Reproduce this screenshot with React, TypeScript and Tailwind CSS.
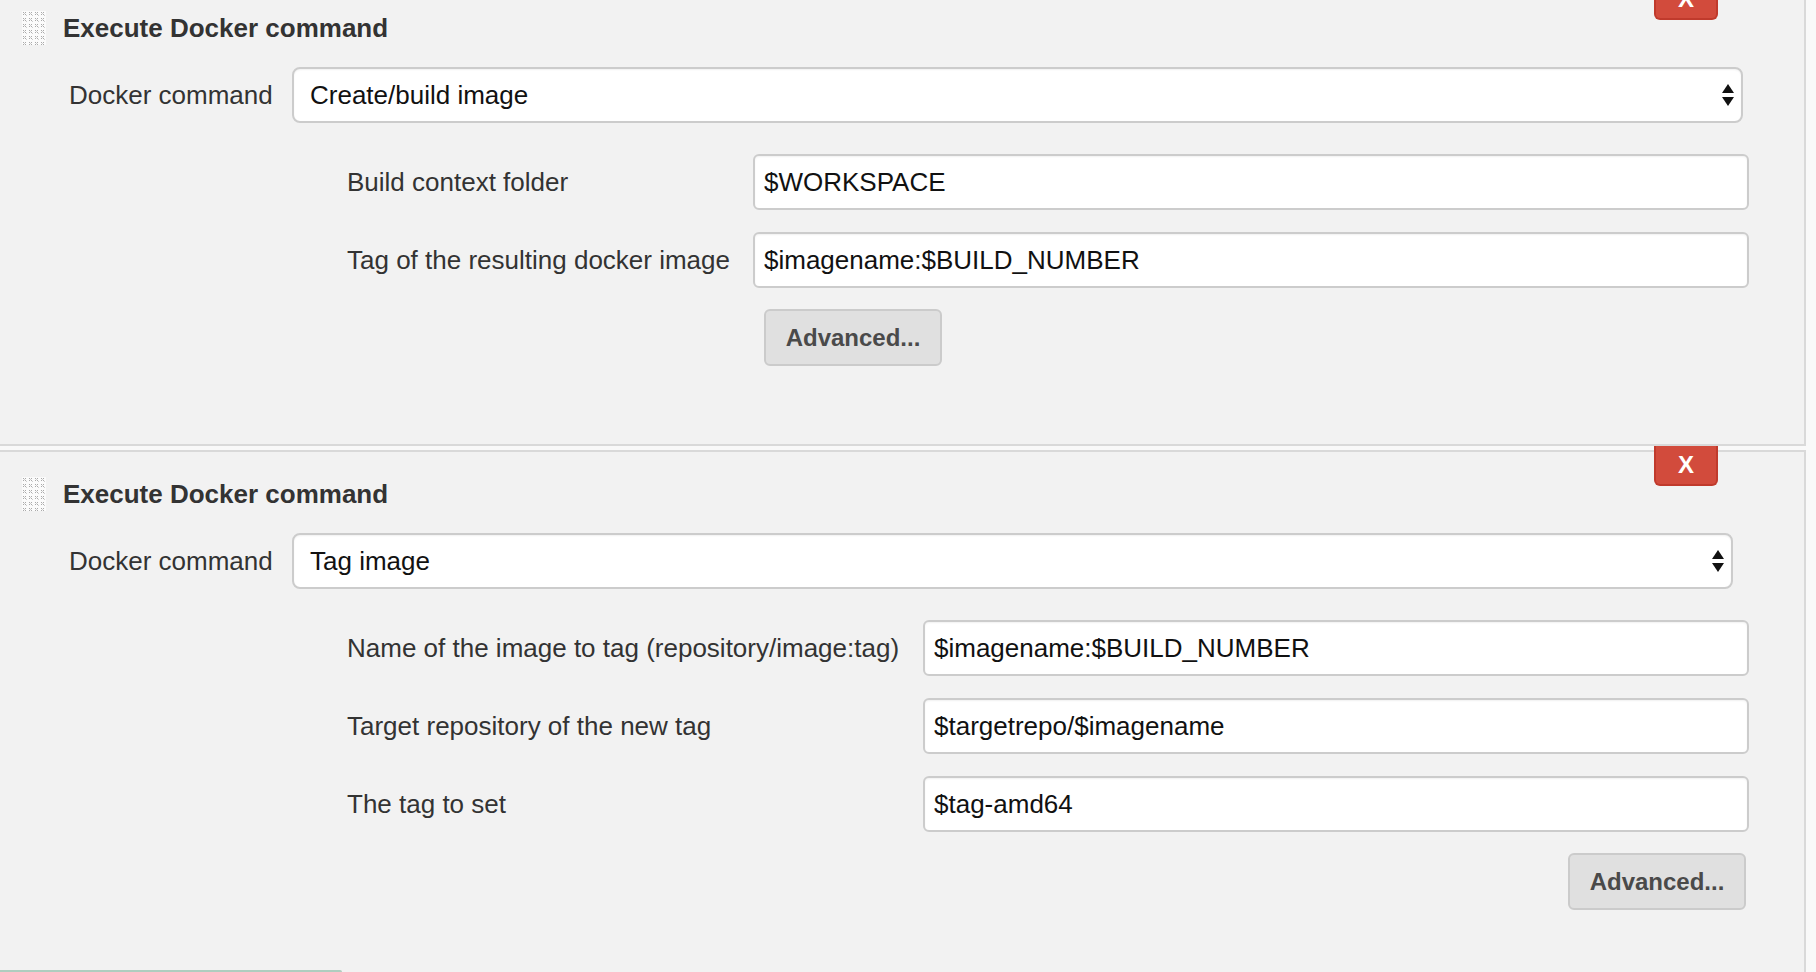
import React from 'react';

interface Field {
  label: string;
  value: string;
}

interface SectionProps {
  command: string;
  selectWidth: string;
  labelWidth: string;
  inputWidth: string;
  fields: Field[];
  advancedRight?: boolean;
  last?: boolean;
}

const DragHandle: React.FC = () => (
  <svg width="24" height="34" viewBox="0 0 24 34" className="shrink-0">
    <defs>
      <pattern id="dots" width="6" height="6" patternUnits="userSpaceOnUse">
        <rect width="6" height="6" fill="#fbfbfb" />
        <rect x="1" y="1" width="1" height="1" fill="#aaaaaa" />
        <rect x="3" y="1" width="1" height="1" fill="#aaaaaa" />
        <rect x="1" y="3" width="1" height="1" fill="#aaaaaa" />
        <rect x="3" y="3" width="1" height="1" fill="#aaaaaa" />
        <rect x="2" y="2" width="1" height="1" fill="#cfcfcf" />
        <rect x="4" y="4" width="1" height="1" fill="#cfcfcf" />
      </pattern>
    </defs>
    <rect width="24" height="34" fill="url(#dots)" />
  </svg>
);

const SelectArrows: React.FC = () => (
  <svg width="12" height="22" viewBox="0 0 12 22" className="shrink-0">
    <polygon points="6,0 12,9 0,9" fill="#111" />
    <polygon points="0,13 12,13 6,22" fill="#111" />
  </svg>
);

const AdvancedButton: React.FC = () => (
  <button className="h-[57px] w-[178px] rounded-[6px] border-2 border-[#cbcbcb] bg-[#e0e0e0] text-[24px] font-bold text-[#4a4a4a]">
    Advanced...
  </button>
);

const DockerSection: React.FC<SectionProps> = ({ command, selectWidth, labelWidth, inputWidth, fields, advancedRight, last }) => (
  <div className="relative pt-[4px] mr-[10px]">
    <div className="absolute top-0 right-[88px] flex h-[40px] w-[64px] items-center justify-center rounded-b-[6px] border-2 border-t-0 border-[#c03a2c] bg-[#d24b3c] text-[24px] font-bold text-white">
      X
    </div>
    <div className={`border-t-2 border-r-2 border-[#d9d9d9] bg-[#f2f2f2] ${last ? 'pb-[200px]' : 'border-b-2 pb-[78px]'}`}>
      <div className="mt-[25px] flex h-[34px] items-center pl-[22px]">
        <DragHandle />
        <h2 className="ml-[17px] text-[26px] font-bold text-[#333]">Execute Docker command</h2>
      </div>

      <div className="mt-[22px] flex items-center">
        <div className="w-[292px] shrink-0 pl-[69px] text-[26px] text-[#333]">Docker command</div>
        <div className={`flex h-[56px] items-center justify-between rounded-[8px] border-2 border-[#cccccc] bg-white pl-[16px] pr-[7px] shadow-[inset_0_1px_2px_rgba(0,0,0,0.06)] ${selectWidth}`}>
          <span className="text-[26px] text-[#111]">{command}</span>
          <SelectArrows />
        </div>
      </div>

      <div className="mt-[31px] flex flex-col gap-[22px]">
        {fields.map((f) => (
          <div key={f.label} className="flex items-center">
            <div className={`shrink-0 pl-[347px] text-[26px] text-[#333] ${labelWidth}`}>{f.label}</div>
            <input
              readOnly
              value={f.value}
              className={`h-[56px] flex-none rounded-[6px] border-2 border-[#cccccc] bg-white px-[9px] text-[26px] text-[#111] shadow-[inset_0_1px_2px_rgba(0,0,0,0.06)] outline-none ${inputWidth}`}
            />
          </div>
        ))}
      </div>

      <div className={`mt-[21px] flex ${advancedRight ? 'justify-end pr-[58px]' : 'pl-[764px]'}`}>
        <AdvancedButton />
      </div>
    </div>
  </div>
);

export default function App() {
  return (
    <div className="relative h-[972px] w-[1816px] overflow-hidden bg-[#f9f9f9] font-['Liberation_Sans',Arial,sans-serif]">
      <div className="-mt-[20px]">
        <DockerSection
          command="Create/build image"
          selectWidth="w-[1451px]"
          labelWidth="w-[753px]"
          inputWidth="w-[996px]"
          fields={[
            { label: 'Build context folder', value: '$WORKSPACE' },
            { label: 'Tag of the resulting docker image', value: '$imagename:$BUILD_NUMBER' },
          ]}
        />
        <DockerSection
          command="Tag image"
          selectWidth="w-[1441px]"
          labelWidth="w-[923px]"
          inputWidth="w-[826px]"
          advancedRight
          last
          fields={[
            { label: 'Name of the image to tag (repository/image:tag)', value: '$imagename:$BUILD_NUMBER' },
            { label: 'Target repository of the new tag', value: '$targetrepo/$imagename' },
            { label: 'The tag to set', value: '$tag-amd64' },
          ]}
        />
      </div>
      <div className="absolute bottom-0 left-0 h-[2px] w-[342px] rounded-tr-[4px] bg-[#afcdbf]" />
    </div>
  );
}
